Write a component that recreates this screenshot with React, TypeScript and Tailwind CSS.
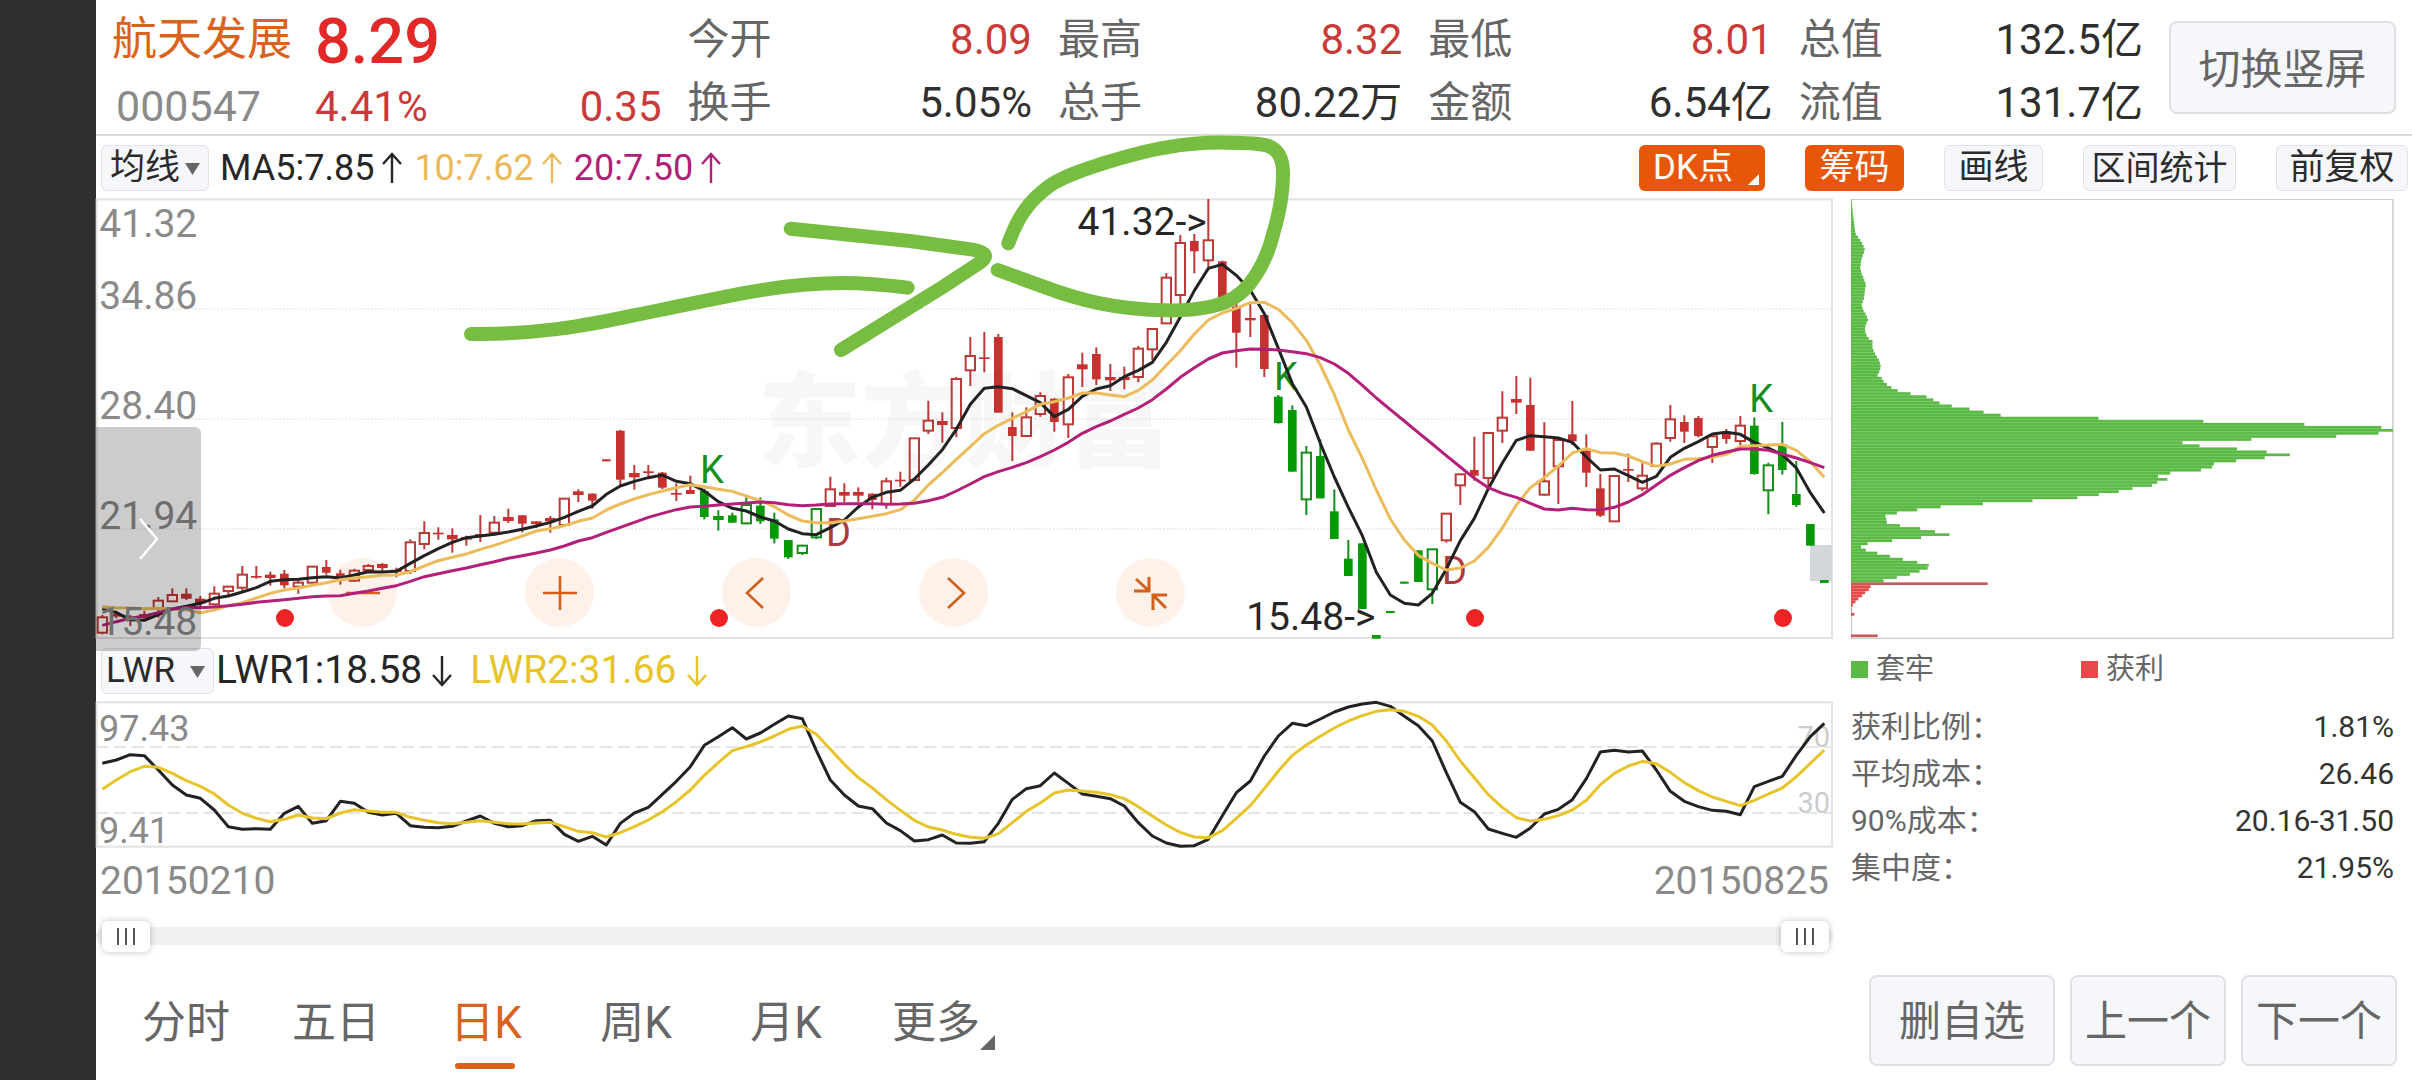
import React, { useState } from "react";

/* Chart drawings use three units per pixel; one trading day is 42 units wide. */
const dayX = (i: number) => 19 + 42 * i;
const toPoints = (ys: number[]) => ys.map((y, i) => `${dayX(i)},${y}`).join(" ");

/* kind: R/G solid body, r/g hollow body; then high, body top, body bottom, low */
type Candle = [string, number, number, number, number];

const candles: Candle[] = [
  ["r", 1275, 1282, 1328, 1333], ["R", 1262, 1272, 1280, 1285], ["R", 1275, 1280, 1290, 1308], ["R", 1262, 1272, 1284, 1290],
  ["r", 1221, 1232, 1256, 1283], ["r", 1195, 1215, 1234, 1234], ["R", 1195, 1211, 1226, 1230], ["R", 1218, 1226, 1240, 1252],
  ["r", 1189, 1211, 1243, 1247], ["r", 1187, 1190, 1203, 1218], ["r", 1128, 1154, 1193, 1202], ["R", 1128, 1158, 1162, 1166],
  ["R", 1145, 1154, 1164, 1187], ["R", 1140, 1151, 1186, 1195], ["r", 1170, 1178, 1190, 1211], ["r", 1130, 1130, 1178, 1178],
  ["R", 1110, 1131, 1148, 1154], ["R", 1139, 1150, 1172, 1184], ["r", 1136, 1142, 1172, 1175], ["r", 1122, 1128, 1140, 1145],
  ["R", 1119, 1122, 1134, 1145], ["R", 1133, 1139, 1146, 1162], ["r", 1048, 1057, 1143, 1152], ["r", 994, 1029, 1062, 1078],
  ["R", 1012, 1028, 1032, 1049], ["R", 1015, 1035, 1048, 1088], ["R", 1037, 1041, 1049, 1067], ["R", 975, 1032, 1038, 1056],
  ["r", 978, 998, 1028, 1037], ["R", 956, 981, 993, 999], ["R", 976, 976, 1001, 1027], ["R", 994, 994, 1002, 1014],
  ["R", 978, 984, 994, 1028], ["r", 926, 926, 1005, 1010], ["R", 898, 904, 915, 936], ["R", 910, 911, 932, 956],
  ["R", 808, 808, 814, 814], ["R", 720, 722, 869, 888], ["R", 825, 849, 862, 899], ["R", 825, 844, 849, 862],
  ["R", 846, 848, 893, 897], ["R", 880, 909, 914, 933], ["R", 857, 900, 912, 912], ["G", 896, 903, 981, 988],
  ["G", 961, 978, 990, 1022], ["G", 968, 976, 998, 998], ["g", 922, 945, 1000, 1003], ["G", 922, 947, 994, 1002],
  ["G", 968, 988, 1046, 1060], ["G", 1050, 1050, 1102, 1107], ["g", 1064, 1067, 1089, 1095], ["g", 955, 957, 1042, 1048],
  ["r", 860, 898, 948, 948], ["R", 880, 906, 917, 936], ["R", 892, 906, 917, 936], ["R", 910, 911, 930, 958],
  ["r", 863, 874, 942, 956], ["R", 845, 869, 874, 890], ["r", 745, 745, 870, 872], ["r", 632, 692, 722, 732],
  ["R", 667, 693, 705, 758], ["r", 561, 567, 714, 741], ["r", 441, 498, 541, 588], ["R", 426, 502, 507, 547],
  ["R", 432, 441, 668, 668], ["R", 667, 711, 738, 813], ["r", 652, 682, 738, 738], ["r", 607, 618, 672, 680],
  ["R", 625, 626, 696, 725], ["r", 552, 562, 703, 744], ["R", 488, 523, 538, 591], ["R", 472, 492, 568, 585],
  ["R", 522, 561, 571, 603], ["R", 530, 561, 570, 598], ["r", 468, 476, 561, 577], ["r", 417, 417, 478, 509],
  ["r", 249, 263, 400, 400], ["r", 135, 159, 315, 365], ["R", 132, 153, 184, 250], ["r", 27, 151, 211, 232],
  ["R", 212, 214, 345, 345], ["R", 325, 350, 428, 533], ["R", 341, 384, 391, 441], ["R", 373, 375, 537, 561],
  ["G", 615, 620, 699, 701], ["G", 646, 660, 845, 845], ["g", 768, 788, 928, 975], ["G", 748, 798, 925, 925],
  ["G", 898, 964, 1047, 1047], ["G", 1050, 1106, 1158, 1158], ["G", 1060, 1060, 1257, 1257], ["G", 1335, 1335, 1346, 1346],
  ["G", 1263, 1263, 1269, 1269], ["G", 1175, 1175, 1181, 1181], ["G", 1081, 1081, 1176, 1176], ["g", 1078, 1078, 1198, 1242],
  ["r", 971, 971, 1051, 1058], ["r", 852, 853, 886, 945], ["R", 740, 840, 857, 872], ["r", 727, 729, 864, 890],
  ["r", 604, 683, 722, 759], ["R", 558, 627, 638, 672], ["R", 563, 645, 782, 782], ["r", 697, 874, 914, 917],
  ["r", 748, 750, 829, 942], ["R", 633, 733, 754, 765], ["R", 733, 783, 848, 891], ["R", 852, 895, 977, 981],
  ["r", 858, 858, 994, 994], ["R", 791, 837, 841, 876], ["r", 820, 857, 895, 904], ["r", 757, 761, 828, 828],
  ["r", 645, 688, 744, 755], ["R", 676, 696, 725, 759], ["R", 678, 684, 738, 742], ["r", 735, 739, 771, 819],
  ["R", 717, 728, 747, 761], ["r", 678, 707, 753, 765], ["G", 682, 707, 852, 854], ["g", 818, 826, 901, 973],
  ["G", 696, 762, 840, 854], ["G", 813, 912, 945, 951], ["G", 1002, 1002, 1067, 1067], ["G", 1170, 1170, 1179, 1179],
];

const ma5 = [
  1256, 1268, 1289, 1291, 1274, 1257, 1249, 1240, 1225, 1218, 1206, 1193, 1174, 1169, 1168, 1163, 1160, 1164, 1155, 1145,
  1146, 1144, 1120, 1097, 1076, 1057, 1043, 1038, 1033, 1026, 1018, 1008, 997, 982, 964, 948, 913, 888, 874, 863,
  855, 874, 881, 903, 935, 955, 963, 981, 993, 1017, 1031, 1034, 1013, 990, 951, 922, 907, 901, 867, 825,
  779, 718, 643, 595, 590, 596, 617, 638, 680, 658, 619, 597, 587, 560, 541, 517, 457, 381, 302, 235,
  223, 256, 301, 371, 475, 581, 651, 760, 861, 952, 1037, 1147, 1215, 1240, 1245, 1210, 1137, 1052, 985, 896,
  819, 751, 737, 740, 744, 757, 801, 840, 837, 857, 877, 859, 802, 775, 755, 732, 727, 733, 757, 774,
  794, 834, 908, 969,
];

const ma10 = [
  1251, 1253, 1254, 1256, 1255, 1257, 1259, 1268, 1260, 1247, 1238, 1224, 1210, 1200, 1194, 1186, 1178, 1169, 1164, 1160,
  1156, 1155, 1145, 1128, 1112, 1102, 1092, 1078, 1066, 1052, 1038, 1023, 1016, 1007, 994, 984, 960, 942, 927, 914,
  903, 893, 884, 890, 898, 904, 918, 932, 950, 975, 993, 998, 998, 993, 986, 979, 971, 959, 930, 885,
  848, 808, 770, 731, 706, 685, 665, 643, 635, 624, 609, 609, 615, 620, 601, 570, 526, 482, 432, 390,
  369, 355, 338, 337, 358, 398, 451, 525, 614, 720, 805, 900, 987, 1050, 1096, 1120, 1140, 1134, 1113, 1072,
  1014, 945, 893, 863, 828, 789, 776, 788, 789, 798, 815, 829, 822, 808, 806, 802, 793, 769, 767, 765,
  763, 781, 815, 862,
];

const ma20 = [
  1306, 1295, 1285, 1278, 1268, 1257, 1252, 1253, 1251, 1247, 1243, 1237, 1233, 1229, 1225, 1220, 1218, 1217, 1210, 1203,
  1195, 1187, 1174, 1160, 1151, 1142, 1134, 1124, 1115, 1105, 1097, 1089, 1080, 1068, 1053, 1043, 1027, 1012, 997, 982,
  970, 959, 951, 949, 945, 942, 939, 936, 938, 944, 947, 945, 942, 941, 941, 941, 943, 942, 940, 932,
  922, 903, 882, 860, 845, 832, 818, 800, 780, 757, 730, 710, 693, 673, 654, 629, 597, 562, 533, 507,
  489, 482, 477, 478, 480, 485, 491, 503, 522, 550, 586, 624, 659, 693, 728, 762, 797, 831, 865, 893,
  910, 922, 940, 957, 960, 955, 959, 960, 952, 936, 914, 885, 856, 833, 812, 796, 786, 777, 777, 781,
  792, 804, 818, 833,
];

const lwr1 = [
  370, 360, 344, 347, 390, 435, 465, 475, 510, 560, 568, 566, 568, 520, 499, 550, 542, 484, 490, 517,
  525, 520, 557, 562, 563, 559, 543, 528, 550, 560, 557, 542, 541, 583, 604, 589, 615, 550, 519, 502,
  463, 424, 380, 316, 290, 263, 297, 279, 253, 228, 236, 332, 420, 465, 498, 506, 549, 572, 603, 599,
  585, 609, 610, 605, 550, 478, 446, 437, 399, 430, 462, 469, 476, 498, 548, 588, 609, 619, 617, 598,
  527, 458, 423, 348, 288, 250, 257, 237, 216, 201, 192, 187, 199, 229, 257, 303, 398, 487, 515, 567,
  580, 592, 564, 522, 508, 479, 416, 336, 331, 336, 333, 390, 454, 484, 500, 511, 514, 524, 440, 424,
  409, 346, 290, 250,
];

const lwr2 = [
  448, 420, 395, 379, 382, 400, 422, 439, 462, 495, 520, 535, 545, 538, 525, 534, 536, 519, 509, 513,
  517, 517, 532, 541, 548, 551, 547, 542, 547, 551, 552, 549, 547, 560, 574, 578, 591, 578, 560, 540,
  515, 485, 450, 406, 368, 332, 320, 306, 288, 268, 258, 283, 328, 373, 413, 444, 479, 511, 541, 561,
  570, 583, 592, 595, 581, 548, 514, 489, 459, 450, 453, 457, 464, 476, 500, 528, 555, 577, 591, 593,
  572, 535, 497, 446, 393, 346, 315, 289, 264, 243, 227, 214, 209, 214, 229, 255, 303, 363, 413, 464,
  502, 533, 543, 538, 527, 510, 481, 434, 400, 378, 364, 371, 397, 428, 452, 471, 484, 497, 481, 462,
  444, 410, 370, 330,
];

const trapped = [
  1, 2, 3, 4, 5, 6, 7, 8, 9, 10, 11, 13, 19, 25, 30, 34, 37, 35, 32, 29, 27, 26, 25, 27, 29, 33, 36, 39, 40, 38, 37, 36,
  35, 32, 29, 31, 34, 39, 43, 46, 42, 39, 38, 39, 42, 48, 58, 58, 58, 61, 65, 70, 75, 78, 80, 79, 76, 72, 83, 88, 97, 109,
  126, 161, 204, 222, 239, 272, 320, 358, 404, 668, 951, 1224, 1432, 1463, 1424, 1310, 1081, 895, 941, 1042, 1122, 1185,
  1117, 1040, 980, 975, 945, 862, 829, 854, 827, 813, 760, 723, 669, 611, 490, 356, 242, 179, 124, 93, 95, 97, 132, 187,
  227, 266, 189, 111, 45, 27, 40, 71, 105, 140, 179, 210, 207, 185, 159, 124, 88,
];
const profit = [369, 53, 48, 38, 30, 20, 12, 5, 1, 1, 9, 0, 0, 0, 0, 0, 0, 72];
const chips = [...trapped, ...profit];
const peak = chips.indexOf(1463);
const chipY = (i: number) => 721 + 9.2 * (i - peak);

function CandleShape({ data, i }: { data: Candle; i: number }) {
  const [kind, high, top, bottom, low] = data;
  const x = dayX(i);
  const red = kind === "R" || kind === "r";
  const solid = kind === "R" || kind === "G";
  const line = red ? "#b93a36" : "#158c1c";
  if (solid) {
    const half = bottom - top < 16 && low > bottom ? 16 : 13;
    return (
      <g>
        <path d={`M${x} ${high}V${low}`} stroke={line} strokeWidth={6} />
        <rect x={x - half} y={top} width={half * 2} height={Math.max(bottom - top, 5)} fill={red ? "#c93030" : "#069b06"} />
      </g>
    );
  }
  return (
    <g stroke={line} strokeWidth={6} fill="none">
      <path d={`M${x} ${high}V${top}M${x} ${bottom}V${low}`} />
      <rect x={x - 14} y={top} width={28} height={bottom - top} />
    </g>
  );
}

function PriceChart() {
  return (
    <svg
      viewBox="0 27 5211 1320"
      className="pointer-events-none relative block h-auto w-full overflow-visible"
      fontFamily='Roboto, "Noto Sans CJK SC", sans-serif'
      role="img"
      aria-label="日K线图"
    >
      <text x="1985" y="806" fontSize="310" fontWeight="900" fill="#f7f7f7">东方财富</text>
      <g stroke="#dedede" strokeWidth="3" strokeDasharray="6 5">
        <path d="M0 357H5208M0 687H5208M0 1017H5208" />
      </g>
      <rect x="2" y="28" width="5206" height="1316" fill="none" stroke="#e2e2e2" strokeWidth="6" />
      <rect x="5142" y="1065" width="66" height="108" fill="#d3d6da" />
      {candles.map((c, i) => (
        <CandleShape key={i} data={c} i={i} />
      ))}
      <g fontSize="114">
        <text x="1812" y="878" fill="#15901c">K</text>
        <text x="2190" y="1069" fill="#b0393a">D</text>
        <text x="3534" y="599" fill="#15901c">K</text>
        <text x="4038" y="1181" fill="#b0393a">D</text>
        <text x="4960" y="665" fill="#15901c">K</text>
      </g>
      <g fill="none" strokeWidth="9" strokeLinejoin="round">
        <polyline points={toPoints(ma5)} stroke="#222222" />
        <polyline points={toPoints(ma10)} stroke="#ebbb5c" />
        <polyline points={toPoints(ma20)} stroke="#b31f79" />
      </g>
      <g fontSize="117" fill="#8a8a8a">
        <text x="10" y="142">41.32</text>
        <text x="10" y="357">34.86</text>
        <text x="10" y="687">28.40</text>
        <text x="10" y="1017">21.94</text>
        <text x="10" y="1335">15.48</text>
      </g>
      <g fontSize="117" fill="#262626" textAnchor="end">
        <text x="3332" y="134">{"41.32->"}</text>
        <text x="3838" y="1320">{"15.48->"}</text>
      </g>
      <g fill="#ee2424">
        <circle cx="567" cy="1284" r="27" />
        <circle cx="1869" cy="1284" r="27" />
        <circle cx="4137" cy="1284" r="27" />
        <circle cx="5061" cy="1284" r="27" />
      </g>
      <g fill="none" stroke="#76bd42" strokeWidth="42" strokeLinecap="round" strokeLinejoin="round">
        <path d="M1125 432C1260 434 1330 423 1392 416C1500 403 1600 378 1692 360C1800 338 1900 316 1992 301C2100 283 2180 279 2242 279C2320 279 2380 286 2435 293" />
        <path d="M2084 116L2442 153L2630 179Q2692 190 2650 219L2542 290L2235 480" />
        <path d="M2737 160C2750 125 2768 85 2787 60C2805 33 2830 10 2862 -14C2905 -42 2960 -60 3012 -77C3080 -98 3140 -117 3212 -128C3270 -138 3330 -143 3392 -142C3440 -142 3480 -142 3512 -134C3548 -122 3560 -95 3561 -55C3562 0 3550 70 3532 130C3520 180 3500 230 3462 280C3435 315 3400 338 3352 348C3300 360 3260 362 3212 361C3140 360 3080 354 3012 340C2950 328 2890 308 2842 290C2795 273 2750 256 2705 240" />
      </g>
    </svg>
  );
}

function LwrChart() {
  return (
    <svg viewBox="0 186 5211 438" className="block h-auto w-full overflow-visible" fontFamily="Roboto, sans-serif" role="img" aria-label="LWR指标图">
      <path d="M0 321H5208M0 519H5208" stroke="#dddddd" strokeWidth="5" strokeDasharray="36 18" />
      <rect x="2" y="187" width="5206" height="433" fill="none" stroke="#e2e2e2" strokeWidth="6" />
      <g fontSize="108" fill="#8a8a8a">
        <text x="9" y="302">97.43</text>
        <text x="9" y="608">9.41</text>
      </g>
      <g fontSize="87" fill="#cccccc" textAnchor="end">
        <text x="5202" y="320">70</text>
        <text x="5202" y="518">30</text>
      </g>
      <g fill="none" strokeWidth="9" strokeLinejoin="round">
        <polyline points={toPoints(lwr1)} stroke="#222222" />
        <polyline points={toPoints(lwr2)} stroke="#e6c42a" />
      </g>
    </svg>
  );
}

function ChipChart() {
  return (
    <svg viewBox="0 27 1466 1320" preserveAspectRatio="none" className="block h-[440px] w-full" role="img" aria-label="筹码分布图">
      <rect x="1" y="28" width="1462" height="1317" fill="none" stroke="#cccccc" strokeWidth="4" />
      {chips.map((w, i) => {
        const green = i < trapped.length;
        const shared = Math.min(w, chips[i + 1] ?? 0);
        return (
          <g key={i}>
            <rect x="0" y={chipY(i) + 3} width={shared} height={3} fill={green ? "#84d072" : "#f08a8a"} />
            <rect x="0" y={chipY(i) - 4} width={w} height={8} fill={green ? "#5bb945" : i === trapped.length || w === 72 ? "#c75a59" : "#e34b4b"} />
          </g>
        );
      })}
    </svg>
  );
}

function TrendArrow({ down = false, className }: { down?: boolean; className: string }) {
  return (
    <svg width="20" height="32" viewBox="0 0 20 32" fill="none" stroke="currentColor" strokeWidth="2.4" className={className} aria-hidden="true">
      {down ? <path d="M10 1V30M1 20L10 30L19 20" /> : <path d="M10 31V2M1 12L10 2L19 12" />}
    </svg>
  );
}

function PickList({ label, options, className, caret }: { label: string; options: string[]; className: string; caret: string }) {
  return (
    <label className="relative block shrink-0">
      <select aria-label={label} className={"block h-[46px] appearance-none rounded-md border border-[#dfe2e7] bg-[#f6f7fa] leading-[44px] text-[#2b2b2b] outline-none " + className}>
        {options.map((o) => (
          <option key={o}>{o}</option>
        ))}
      </select>
      <svg width="15" height="12" viewBox="0 0 15 12" className={"pointer-events-none absolute top-[18px] " + caret} aria-hidden="true">
        <path d="M0 0H15L7.500 12Z" fill="#666" />
      </svg>
    </label>
  );
}

const stats = [
  [{ label: "今开", value: "8.09", up: true }, { label: "换手", value: "5.05%", up: false }],
  [{ label: "最高", value: "8.32", up: true }, { label: "总手", value: "80.22万", up: false }],
  [{ label: "最低", value: "8.01", up: true }, { label: "金额", value: "6.54亿", up: false }],
  [{ label: "总值", value: "132.5亿", up: false }, { label: "流值", value: "131.7亿", up: false }],
];

function Header() {
  return (
    <header className="flex h-[136px] items-center gap-[26px] border-b-2 border-[#d9d9d9] pl-4 pr-4 text-[42px]">
      <div className="grid flex-1 grid-cols-[549fr_344fr_344fr_344fr_344fr] gap-x-[26px] pt-2">
        <div className="flex flex-col">
          <div className="flex h-[63px] items-center gap-[23px]">
            <h1 className="text-[45px] leading-none text-[#d9621c]">航天发展</h1>
            <strong className="pt-1 text-[63px] font-medium leading-none text-[#e32828]">8.29</strong>
          </div>
          <div className="flex h-[63px] items-center pt-2 leading-none">
            <span className="w-[203px] pl-1 text-[43px] text-[#8a8a8a]">000547</span>
            <span className="flex-1 text-[#c93a38]">4.41%</span>
            <span className="text-[#c93a38]">0.35</span>
          </div>
        </div>
        {stats.map((column, c) => (
          <dl key={c}>
            {column.map((s) => (
              <div key={s.label} className="flex h-[63px] items-center justify-between leading-none">
                <dt className="text-[#666]">{s.label}</dt>
                <dd className={s.up ? "text-[#c93a38]" : "text-[#2f2f2f]"}>{s.value}</dd>
              </div>
            ))}
          </dl>
        ))}
      </div>
      <button type="button" className="h-[93px] w-[227px] shrink-0 rounded-lg border-2 border-[#dde0e5] bg-[#f6f7fa] pt-1 text-[#666]">
        切换竖屏
      </button>
    </header>
  );
}

const toolButton = "h-[46px] rounded-md border border-[#dfe2e7] bg-[#f6f7fa] text-[#2b2b2b] ";
const activeButton = "h-[46px] rounded-md bg-[#e8560a] text-white ";

function Toolbar() {
  return (
    <div className="flex h-[63px] items-center pl-[5px] pr-1 text-[35px] leading-none">
      <PickList label="均线" options={["均线", "BOLL"]} className="w-[108px] pl-2 text-[35px]" caret="right-[9px]" />
      <p className="ml-[11px] flex items-center text-[36px]">
        <span className="text-[#262626]">MA5:7.85</span>
        <TrendArrow className="ml-2 mr-3 text-[#262626]" />
        <span className="text-[#ebb95a]">10:7.62</span>
        <TrendArrow className="ml-2 mr-3 text-[#ebb95a]" />
        <span className="text-[#b01f78]">20:7.50</span>
        <TrendArrow className="ml-2 text-[#b01f78]" />
      </p>
      <div className="ml-auto flex gap-10">
        <button type="button" className={activeButton + "relative w-[126px] pl-[14px] text-left"}>
          DK点
          <svg width="11" height="11" viewBox="0 0 11 11" className="absolute bottom-1.5 right-1.5" aria-hidden="true">
            <path d="M11 0V11H0Z" fill="#fff" />
          </svg>
        </button>
        <button type="button" className={activeButton + "w-[99px]"}>筹码</button>
        <button type="button" className={toolButton + "w-[99px]"}>画线</button>
        <button type="button" className={toolButton + "w-[153px] text-[34px]"}>区间统计</button>
        <button type="button" className={toolButton + "w-[132px]"}>前复权</button>
      </div>
    </div>
  );
}

function RoundButton({ label, children }: { label: string; children: React.ReactNode }) {
  return (
    <button type="button" aria-label={label} className="flex size-[69px] items-center justify-center rounded-full bg-[#fef1e9]">
      <svg width="36" height="36" viewBox="0 0 36 36" fill="none" stroke="#d2601a" strokeWidth="2.600">
        {children}
      </svg>
    </button>
  );
}

const thumb =
  "pointer-events-none absolute inset-0 h-full w-full appearance-none bg-transparent [&::-webkit-slider-thumb]:pointer-events-auto [&::-webkit-slider-thumb]:h-[31px] [&::-webkit-slider-thumb]:w-[48px] [&::-webkit-slider-thumb]:appearance-none [&::-webkit-slider-thumb]:rounded-md [&::-webkit-slider-thumb]:bg-white [&::-webkit-slider-thumb]:bg-[repeating-linear-gradient(90deg,#555_0_2px,#fff_2px_8px)] [&::-webkit-slider-thumb]:bg-[length:18px_17px] [&::-webkit-slider-thumb]:bg-center [&::-webkit-slider-thumb]:bg-no-repeat [&::-webkit-slider-thumb]:shadow-[0_0_6px_rgba(0,0,0,0.25)]";

function RangeBar() {
  const [from, setFrom] = useState(0);
  const [to, setTo] = useState(100);
  return (
    <div className="flex h-12 items-center">
      <div className="relative h-[18px] w-full rounded-full bg-[#f0f0f3]">
        <div className="absolute -inset-y-2 left-1.5 right-1">
          <input type="range" aria-label="起始日期" value={from} onChange={(e) => setFrom(Number(e.target.value))} className={thumb} />
          <input type="range" aria-label="结束日期" value={to} onChange={(e) => setTo(Number(e.target.value))} className={thumb} />
        </div>
      </div>
    </div>
  );
}

const costs = [
  ["获利比例：", "1.81%"],
  ["平均成本：", "26.46"],
  ["90%成本：", "20.16-31.50"],
  ["集中度：", "21.95%"],
];

const tabs = ["分时", "五日", "日K", "周K", "月K", "更多"];
const footButton = "h-[91px] rounded-lg border-2 border-[#dde0e5] bg-[#f6f7fa] text-[42px] text-[#666] ";

export default function App() {
  const [tab, setTab] = useState("日K");
  return (
    <div className='flex min-h-screen bg-[#2f2f2f] font-[Roboto,"Noto_Sans_CJK_SC",sans-serif]'>
      <main className="ml-24 flex min-w-0 flex-1 flex-col bg-white">
        <Header />
        <Toolbar />
        <div className="grid grid-cols-[1737fr_543fr] gap-x-[18px] pr-[18px]">
          <section className="min-w-0">
            <div className="relative">
              <div className="absolute left-[232px] top-[359px] flex gap-32">
                <RoundButton label="缩小"><path d="M1 18H35" /></RoundButton>
                <RoundButton label="放大"><path d="M1 18H35M18 1V35" /></RoundButton>
                <RoundButton label="左移"><path d="M24 3L8 18L24 33" /></RoundButton>
                <RoundButton label="右移"><path d="M12 3L28 18L12 33" /></RoundButton>
                <RoundButton label="退出全屏">
                  <path d="M3 4L15 15M16 2V16H1M33 33L21 21M20 35V20H34" strokeWidth="3" />
                </RoundButton>
              </div>
              <PriceChart />
              <button
                type="button"
                aria-label="展开侧栏"
                className="absolute left-0 top-[228px] z-10 flex h-[224px] w-[105px] items-center justify-center rounded-r-md bg-black/20"
              >
                <svg width="20" height="42" viewBox="0 0 20 42" fill="none" stroke="#fff" strokeWidth="2.600">
                  <path d="M1 1L18 21L1 41" />
                </svg>
              </button>
            </div>
            <div className="flex h-[63px] items-center pl-[5px] text-[39px] leading-none">
              <PickList label="指标" options={["LWR", "MACD", "KDJ"]} className="w-[113px] pl-1 text-[35px]" caret="right-[9px]" />
              <p className="ml-0.5 flex items-center">
                <span className="text-[#262626]">LWR1:18.58</span>
                <TrendArrow down className="ml-2.5 mr-[18px] text-[#262626]" />
                <span className="text-[#e6c42a]">LWR2:31.66</span>
                <TrendArrow down className="ml-2.5 text-[#e6c42a]" />
              </p>
            </div>
            <LwrChart />
            <div className="flex h-16 items-center justify-between pl-1 pr-1 pt-0.5 text-[39px] leading-none text-[#8a8a8a]">
              <time>20150210</time>
              <time>20150825</time>
            </div>
            <RangeBar />
          </section>
          <aside className="min-w-0 text-[30px] leading-none">
            <ChipChart />
            <div className="grid h-[60px] grid-cols-[230px_1fr] items-center text-[29px] text-[#666]">
              <span className="flex items-center gap-2"><i className="size-[17px] bg-[#5bb945]" />套牢</span>
              <span className="flex items-center gap-2"><i className="size-[17px] bg-[#e64a4a]" />获利</span>
            </div>
            <table className="mt-1 w-full">
              <tbody>
                {costs.map(([name, value]) => (
                  <tr key={name} className="h-[47px]">
                    <th scope="row" className="p-0 text-left font-normal text-[#666]">{name}</th>
                    <td className="p-0 text-right text-[#333]">{value}</td>
                  </tr>
                ))}
              </tbody>
            </table>
          </aside>
        </div>
        <footer className="flex h-[120px] items-center justify-between pl-[15px] pr-[15px]">
          <nav className="flex text-[44px]">
            {tabs.map((t) => (
              <button
                key={t}
                type="button"
                onClick={() => setTab(t)}
                className={"relative h-[106px] w-[150px] pt-1.5 leading-none " + (t === tab ? "text-[#d9621c]" : "text-[#666]")}
              >
                {t}
                {t === tab && <span className="absolute bottom-1 left-11 h-1.5 w-[60px] rounded-full bg-[#d9601a]" />}
                {t === "更多" && (
                  <svg width="15" height="15" viewBox="0 0 15 15" className="absolute bottom-[23px] right-4" aria-hidden="true">
                    <path d="M15 0V15H0Z" fill="#666" />
                  </svg>
                )}
              </button>
            ))}
          </nav>
          <div className="flex gap-[15px]">
            <button type="button" className={footButton + "w-[186px] pt-0.5"}>删自选</button>
            <button type="button" className={footButton + "w-[156px] pt-0.5"}>上一个</button>
            <button type="button" className={footButton + "w-[156px] pt-0.5"}>下一个</button>
          </div>
        </footer>
      </main>
    </div>
  );
}
